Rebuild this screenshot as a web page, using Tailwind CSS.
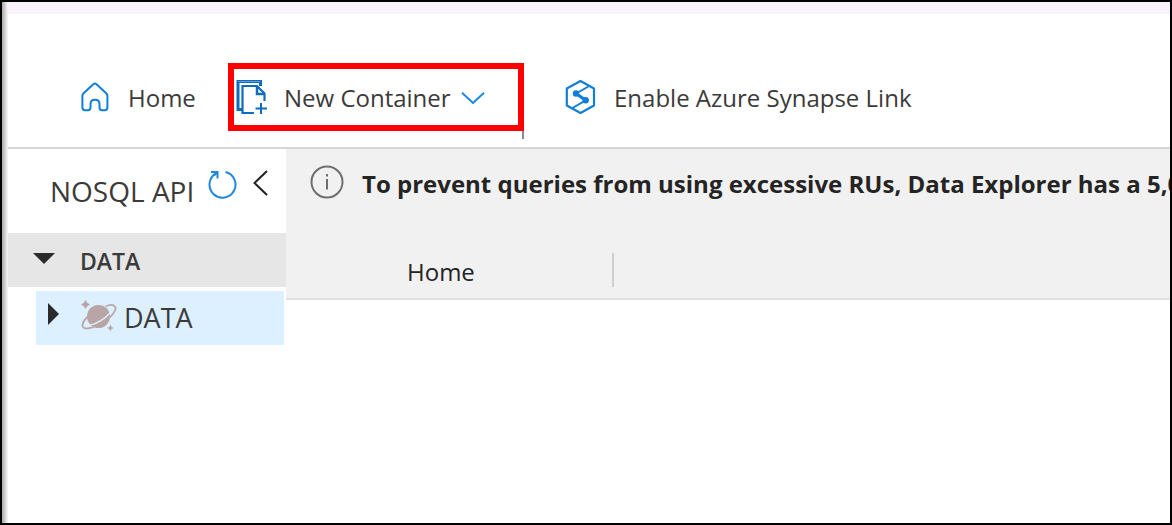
<!DOCTYPE html>
<html lang="en">
<head>
  <meta charset="UTF-8" />
  <meta name="viewport" content="width=device-width, initial-scale=1.0"/>
  <title>Data Explorer</title>
  <script src="https://cdn.jsdelivr.net/npm/@tailwindcss/browser@4"></script>
</head>
<body class="min-h-screen flex overflow-x-hidden bg-white border-2 border-black font-['Open_Sans','Noto_Sans',sans-serif] text-[#3b3a39]">
  <div class="w-[6px] shrink-0 bg-linear-to-r from-[#a8a8a8] to-[#fafafa]"></div>

  <div class="flex-1 min-w-0 flex flex-col">
    <div class="h-3 bg-[#f8f3fb]"></div>

    <!-- Command bar -->
    <header class="flex pt-[49px] pb-4 pl-[72px] border-b-2 border-[#d6d6d6] text-2xl whitespace-nowrap">
      <button class="flex items-center gap-[18px] w-[148px] h-[68px]">
        <svg class="w-[30px] h-[30px] shrink-0" viewBox="0 0 30 30" fill="none" stroke="#0f7fdb" stroke-width="2" stroke-linejoin="round">
          <path d="M13.3 2.2 3.6 11.2Q2.4 12.4 2.4 14V25.5Q2.4 28.2 5 28.2H8Q10.5 28.2 10.5 25.5V22Q10.5 17.8 15 17.8T19.5 22V25.5Q19.5 28.2 22 28.2H24.7Q27.4 28.2 27.4 25.5V14Q27.4 12.4 26.2 11.2L16.5 2.2Q15 .9 13.3 2.2Z"/>
        </svg>
        <span class="pt-[2px]">Home</span>
      </button>
      <button class="relative flex items-center w-[296px] h-[68px] pl-[2px] border-[6px] border-[#ff0000]">
        <svg class="w-[32px] h-[36px] shrink-0" viewBox="0 0 32 36" fill="none" stroke="#0f6cbd">
          <path d="M6 30.5H2V2.500H24.500V7" stroke-width="3"/>
          <path d="M2 2.500H24.500" stroke="#5b9fd8" stroke-width="1"/>
          <path d="M18 34H6.500V7H21L28.500 14.500V22" stroke-width="2.200"/>
          <path d="M21 7V15H28.500" stroke-width="2.500"/>
          <path d="M25 24V35M19.500 29.500H31" stroke-width="2"/>
        </svg>
        <span class="ml-4 pt-[2px]">New Container</span>
        <svg class="w-6 h-3 ml-[10px] mt-[2px]" viewBox="0 0 24 12" fill="none" stroke="#1f87e0" stroke-width="2">
          <path d="M1 .8 12 11 23 .8"/>
        </svg>
        <span class="absolute top-[62px] -right-[6px] w-[2px] h-2 bg-[#8a8886]"></span>
      </button>
      <button class="flex items-center gap-[18px] h-[68px] ml-10">
        <svg class="w-8 h-9 shrink-0" viewBox="0 0 32 36" fill="none" stroke="#0f7fdb" stroke-width="2.200" stroke-linejoin="round">
          <path d="M16.500 2 30 9.500V26.500L16.500 34 2.800 26.500V9.500Z"/>
          <path d="M24.500 7.500 12 14.500 21.700 21.300 8.500 29" stroke-width="2"/>
          <path d="M12 14.500 21.700 21.300" stroke-width="3"/>
          <circle cx="12" cy="14.500" r="3.200" fill="#0f7fdb" stroke="none"/>
          <circle cx="21.700" cy="21.300" r="3.200" fill="#0f7fdb" stroke="none"/>
        </svg>
        <span class="pt-[2px]">Enable Azure Synapse Link</span>
      </button>
    </header>

    <div class="flex-1 flex">
      <!-- Resource tree -->
      <aside class="w-[278px] shrink-0">
        <div class="flex h-[84px] pl-[42px] pt-[18px]">
          <h1 class="w-[156px] pt-[6px] text-[28px] leading-9 whitespace-nowrap">NOSQL API</h1>
          <button aria-label="Refresh" class="w-8 h-8">
            <svg class="w-8 h-8" viewBox="0 0 32 32" fill="none" stroke="#1f87e0" stroke-width="2">
              <path d="M19.500 5A13 13 0 1 1 9.500 6.700"/>
              <path d="M5 5H11.500V11.500M11 5.500 8 8.500"/>
            </svg>
          </button>
          <button aria-label="Collapse" class="w-4 h-8 ml-[14px]">
            <svg class="w-4 h-8" viewBox="0 0 16 32" fill="none" stroke="#222" stroke-width="2">
              <path d="M15 4 2.5 16 15 28"/>
            </svg>
          </button>
        </div>
        <button class="flex items-center w-full h-[54px] pl-[25px] pt-[2px] bg-[#e6e6e6] text-[23px] leading-8 font-semibold">
          <svg class="w-[22px] h-[11px] mb-[6px]" viewBox="0 0 22 11" fill="#2b2b2b"><path d="M0 0H22L11 11Z"/></svg>
          <span class="ml-[25px]">DATA</span>
        </button>
        <button class="flex items-center w-[248px] h-[54px] mt-1 ml-7 pl-3 bg-[#dcf0ff] text-[27px] leading-9">
          <svg class="w-[11px] h-[22px] mb-2" viewBox="0 0 11 22" fill="#2b2b2b"><path d="M0 0V22L11 11Z"/></svg>
          <svg class="w-9 h-8 ml-[22px] mb-1" viewBox="0 0 36 32" fill="#b9a5a5">
            <circle cx="17.500" cy="16.500" r="11.500"/>
            <path d="M4.500 0 6.200 2.800 9 4.500 6.200 6.200 4.500 9 2.800 6.200 0 4.500 2.800 2.800Z"/>
            <path d="M29.500 24.500 30.600 26.900 33 28 30.600 29.100 29.500 31.500 28.400 29.100 26 28 28.400 26.900Z"/>
            <path d="M4.500 25.500C12 26.500 27.500 17.500 31 9.500" fill="none" stroke="#dcf0ff" stroke-width="1.500"/>
            <path d="M6.500 17C-1 24 .5 29.500 7 28.300 16 27 30.500 18.500 34 10.500 36 5 31 3.500 24.500 6.500" fill="none" stroke="#b9a5a5" stroke-width="1.800"/>
          </svg>
          <span class="ml-[7px]">DATA</span>
        </button>
      </aside>

      <!-- Tabs area -->
      <main class="flex-1 min-w-0">
        <div class="h-[151px] bg-[#f2f1f1] border-b-2 border-[#dfdfdf]">
          <div class="flex items-center h-[68px] pl-6 overflow-hidden whitespace-nowrap text-[#242424]">
            <svg class="w-[34px] h-[34px] shrink-0 mb-[2px]" viewBox="0 0 34 34" fill="none" stroke="#706e6c" stroke-width="2">
              <circle cx="17" cy="17" r="15.500"/>
              <path d="M17 14V24.500M17 9V11.500"/>
            </svg>
            <p class="ml-[18px] pt-[2px] text-2xl font-bold">To prevent queries from using excessive RUs, Data Explorer has a 5,000 RU default limit.</p>
          </div>
          <div class="flex items-center h-9 mt-[35px]">
            <button class="w-[326px] pl-[121px] pt-1 text-left text-2xl text-[#242424]">Home</button>
            <span class="w-[2px] h-[34px] bg-[#cfcfcf]"></span>
          </div>
        </div>
      </main>
    </div>
  </div>
</body>
</html>
